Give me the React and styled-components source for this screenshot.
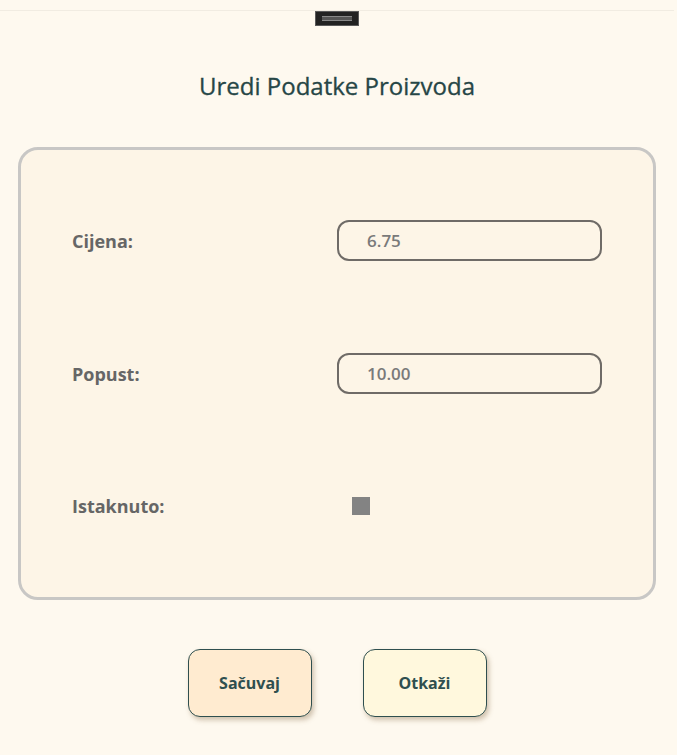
import React from "react";
import styled, { createGlobalStyle } from "styled-components";

const Global = createGlobalStyle`
  html, body { margin: 0; padding: 0; background: #fef9ef; overflow: hidden; }
  body { font-family: "Open Sans", "Noto Sans", sans-serif; }
  * { box-sizing: border-box; }
`;

const Page = styled.div`
  width: 674px;
  height: 745px;
  background: #fef9ef;
  border-top: 1px solid #f1ece2;
  margin-top: 10px;
  display: flex;
  flex-direction: column;
  align-items: center;
`;

const Handle = styled.div`
  width: 44px;
  height: 15px;
  background: #222;
  border: 1px solid #5a5a5a;
  display: flex;
  align-items: center;
  justify-content: center;
  &::after {
    content: "";
    width: 30px;
    height: 3px;
    border-top: 1px solid #888;
    border-bottom: 1px solid #888;
    background: #555;
  }
`;

const Title = styled.h1`
  margin: 43px 0 0;
  font-size: 24px;
  font-weight: 400;
  color: #264646;
  line-height: 34px;
  -webkit-text-stroke: 0.3px #264646;
`;

const Card = styled.div`
  margin-top: 44px;
  width: 638px;
  height: 453px;
  background: #fdf5e7;
  border: 3px solid #c8c7c5;
  border-radius: 20px;
  padding: 70px 51px 0;
  display: flex;
  flex-direction: column;
`;

const Row = styled.div`
  display: grid;
  grid-template-columns: 1fr 1fr;
  align-items: center;
  height: ${(p) => p.$h}px;
  margin-top: ${(p) => p.$mt || 0}px;
`;

const Label = styled.label`
  font-size: 18px;
  font-weight: 700;
  color: #666;
`;

const Input = styled.input`
  width: 265px;
  height: 41px;
  border: 2.5px solid #6f6b67;
  border-radius: 12px;
  background: #fdf5e7;
  padding: 0 0 0 28px;
  font-family: inherit;
  font-size: 17px;
  font-weight: 600;
  color: #7a7a7a;
  outline: none;
`;

const Check = styled.div`
  width: 18px;
  height: 18px;
  background: #838383;
  margin-left: 15px;
`;

const Buttons = styled.div`
  margin-top: 49px;
  display: flex;
  gap: 51px;
`;

const Button = styled.button`
  width: 124px;
  height: 68px;
  border: 1px solid #2f4f4f;
  border-radius: 12px;
  background: ${(p) => p.$bg};
  box-shadow: 2px 3px 5px rgba(120, 90, 50, 0.35);
  font-family: inherit;
  font-size: 16px;
  font-weight: 700;
  color: #2f4f4f;
`;

export default function App() {
  return (
    <>
      <Global />
      <Page>
        <Handle />
        <Title>Uredi Podatke Proizvoda</Title>
        <Card>
          <Row $h={41}>
            <Label>Cijena:</Label>
            <Input defaultValue="6.75" />
          </Row>
          <Row $h={41} $mt={92}>
            <Label>Popust:</Label>
            <Input defaultValue="10.00" />
          </Row>
          <Row $h={24} $mt={100}>
            <Label>Istaknuto:</Label>
            <Check />
          </Row>
        </Card>
        <Buttons>
          <Button $bg="#ffebd0">Sačuvaj</Button>
          <Button $bg="#fff8dd">Otkaži</Button>
        </Buttons>
      </Page>
    </>
  );
}
